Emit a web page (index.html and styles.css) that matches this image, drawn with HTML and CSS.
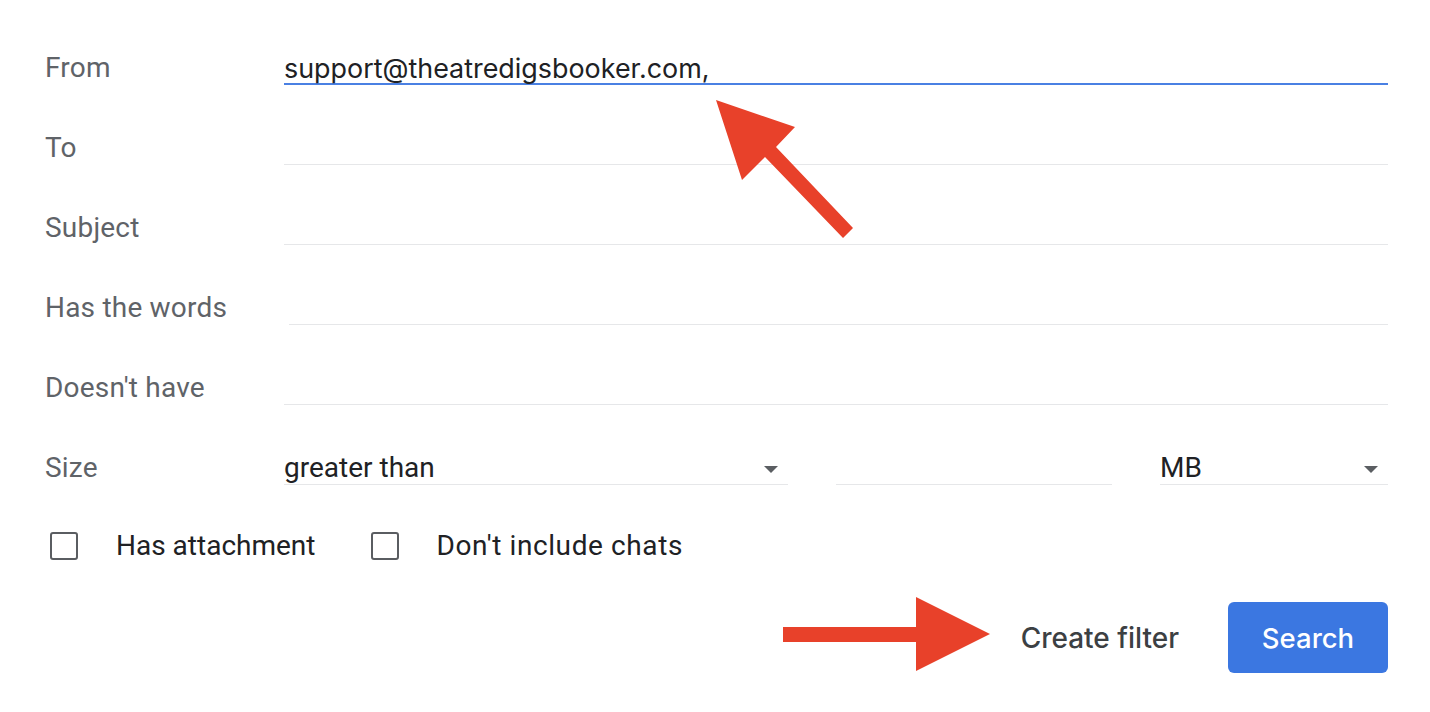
FILE: index.html
```html
<!DOCTYPE html>
<html>
<head>
<meta charset="utf-8">
<link rel="stylesheet" href="styles.css">
</head>
<body>
<div class="form">
  <div class="row">
    <div class="label">From</div>
    <div class="field field-active">support@theatredigsbooker.com,</div>
  </div>
  <div class="row">
    <div class="label">To</div>
    <div class="field"></div>
  </div>
  <div class="row">
    <div class="label">Subject</div>
    <div class="field"></div>
  </div>
  <div class="row">
    <div class="label">Has the words</div>
    <div class="field field-offset"></div>
  </div>
  <div class="row">
    <div class="label">Doesn't have</div>
    <div class="field"></div>
  </div>
  <div class="row">
    <div class="label">Size</div>
    <div class="size-group">
      <div class="field select select-op">greater than<span class="caret"></span></div>
      <div class="field select-num"></div>
      <div class="field select select-unit">MB<span class="caret"></span></div>
    </div>
  </div>
  <div class="checks">
    <label class="check"><span class="box"></span><span class="check-text">Has attachment</span></label>
    <label class="check"><span class="box"></span><span class="check-text check-text-wide">Don't include chats</span></label>
  </div>
  <div class="actions">
    <span class="btn-text">Create filter</span>
    <span class="btn-primary">Search</span>
  </div>
</div>
<svg class="annot" width="1430" height="712" viewBox="0 0 1430 712">
  <g fill="#e8412a">
    <polygon points="716,100 795,127 776,147 853,228 843,238 765,157 742,180"/>
    <polygon points="783,627 916,627 916,597 990,634 916,671 916,642 783,642"/>
  </g>
</svg>
</body>
</html>
```
FILE: styles.css
```css
html, body {
  margin: 0;
  padding: 0;
  background: #ffffff;
}
body {
  font-family: Roboto, "Liberation Sans", sans-serif;
  width: 1430px;
  height: 712px;
  overflow: hidden;
  position: relative;
}
.form {
  padding: 5px 42px 0 45px;
}
.row {
  display: grid;
  grid-template-columns: 239px 1fr;
  height: 80px;
  align-items: end;
}
.label {
  font-size: 28px;
  line-height: 32px;
  color: #5f6368;
  padding-bottom: 1px;
  letter-spacing: 0.2px;
}
.field {
  font-size: 28px;
  line-height: 32px;
  height: 32px;
  color: #202124;
  border-bottom: 1px solid #e6e7e9;
  white-space: nowrap;
}
.field-active {
  font-family: Inter, Roboto, sans-serif;
  font-size: 26.9px;
  border-bottom: 2px solid #4a80e3;
  height: 31px;
}
.field-offset {
  margin-left: 5px;
}
.size-group {
  display: flex;
  gap: 48px;
}
.select {
  position: relative;
}
.select-op {
  width: 504px;
}
.select-num {
  width: 276px;
}
.select-unit {
  width: 228px;
}
.caret {
  position: absolute;
  top: 14px;
  right: 10px;
  width: 0;
  height: 0;
  border-left: 7px solid transparent;
  border-right: 7px solid transparent;
  border-top: 7px solid #5b5e62;
}
.checks {
  display: flex;
  align-items: center;
  height: 80px;
  margin-top: 21px;
  padding-left: 5px;
}
.check {
  display: flex;
  align-items: center;
  margin-right: 55px;
}
.box {
  width: 24px;
  height: 24px;
  border: 2.5px solid #5a5d61;
  border-radius: 3px;
  margin-right: 38px;
}
.check-text {
  font-size: 28px;
  color: #202124;
  line-height: 32px;
}
.check-text-wide {
  letter-spacing: 0.6px;
}
.actions {
  display: flex;
  justify-content: flex-end;
  align-items: center;
  margin-top: 16px;
  gap: 49px;
}
.btn-text {
  font-family: Inter, Roboto, sans-serif;
  font-size: 28px;
  font-weight: 500;
  color: #3c4043;
}
.btn-primary {
  display: flex;
  align-items: center;
  justify-content: center;
  width: 160px;
  height: 71px;
  background: #3b77e1;
  border-radius: 6px;
  color: #ffffff;
  font-family: Inter, Roboto, sans-serif;
  font-size: 27.5px;
  font-weight: 500;
}
.annot {
  position: absolute;
  left: 0;
  top: 0;
  pointer-events: none;
}
```
